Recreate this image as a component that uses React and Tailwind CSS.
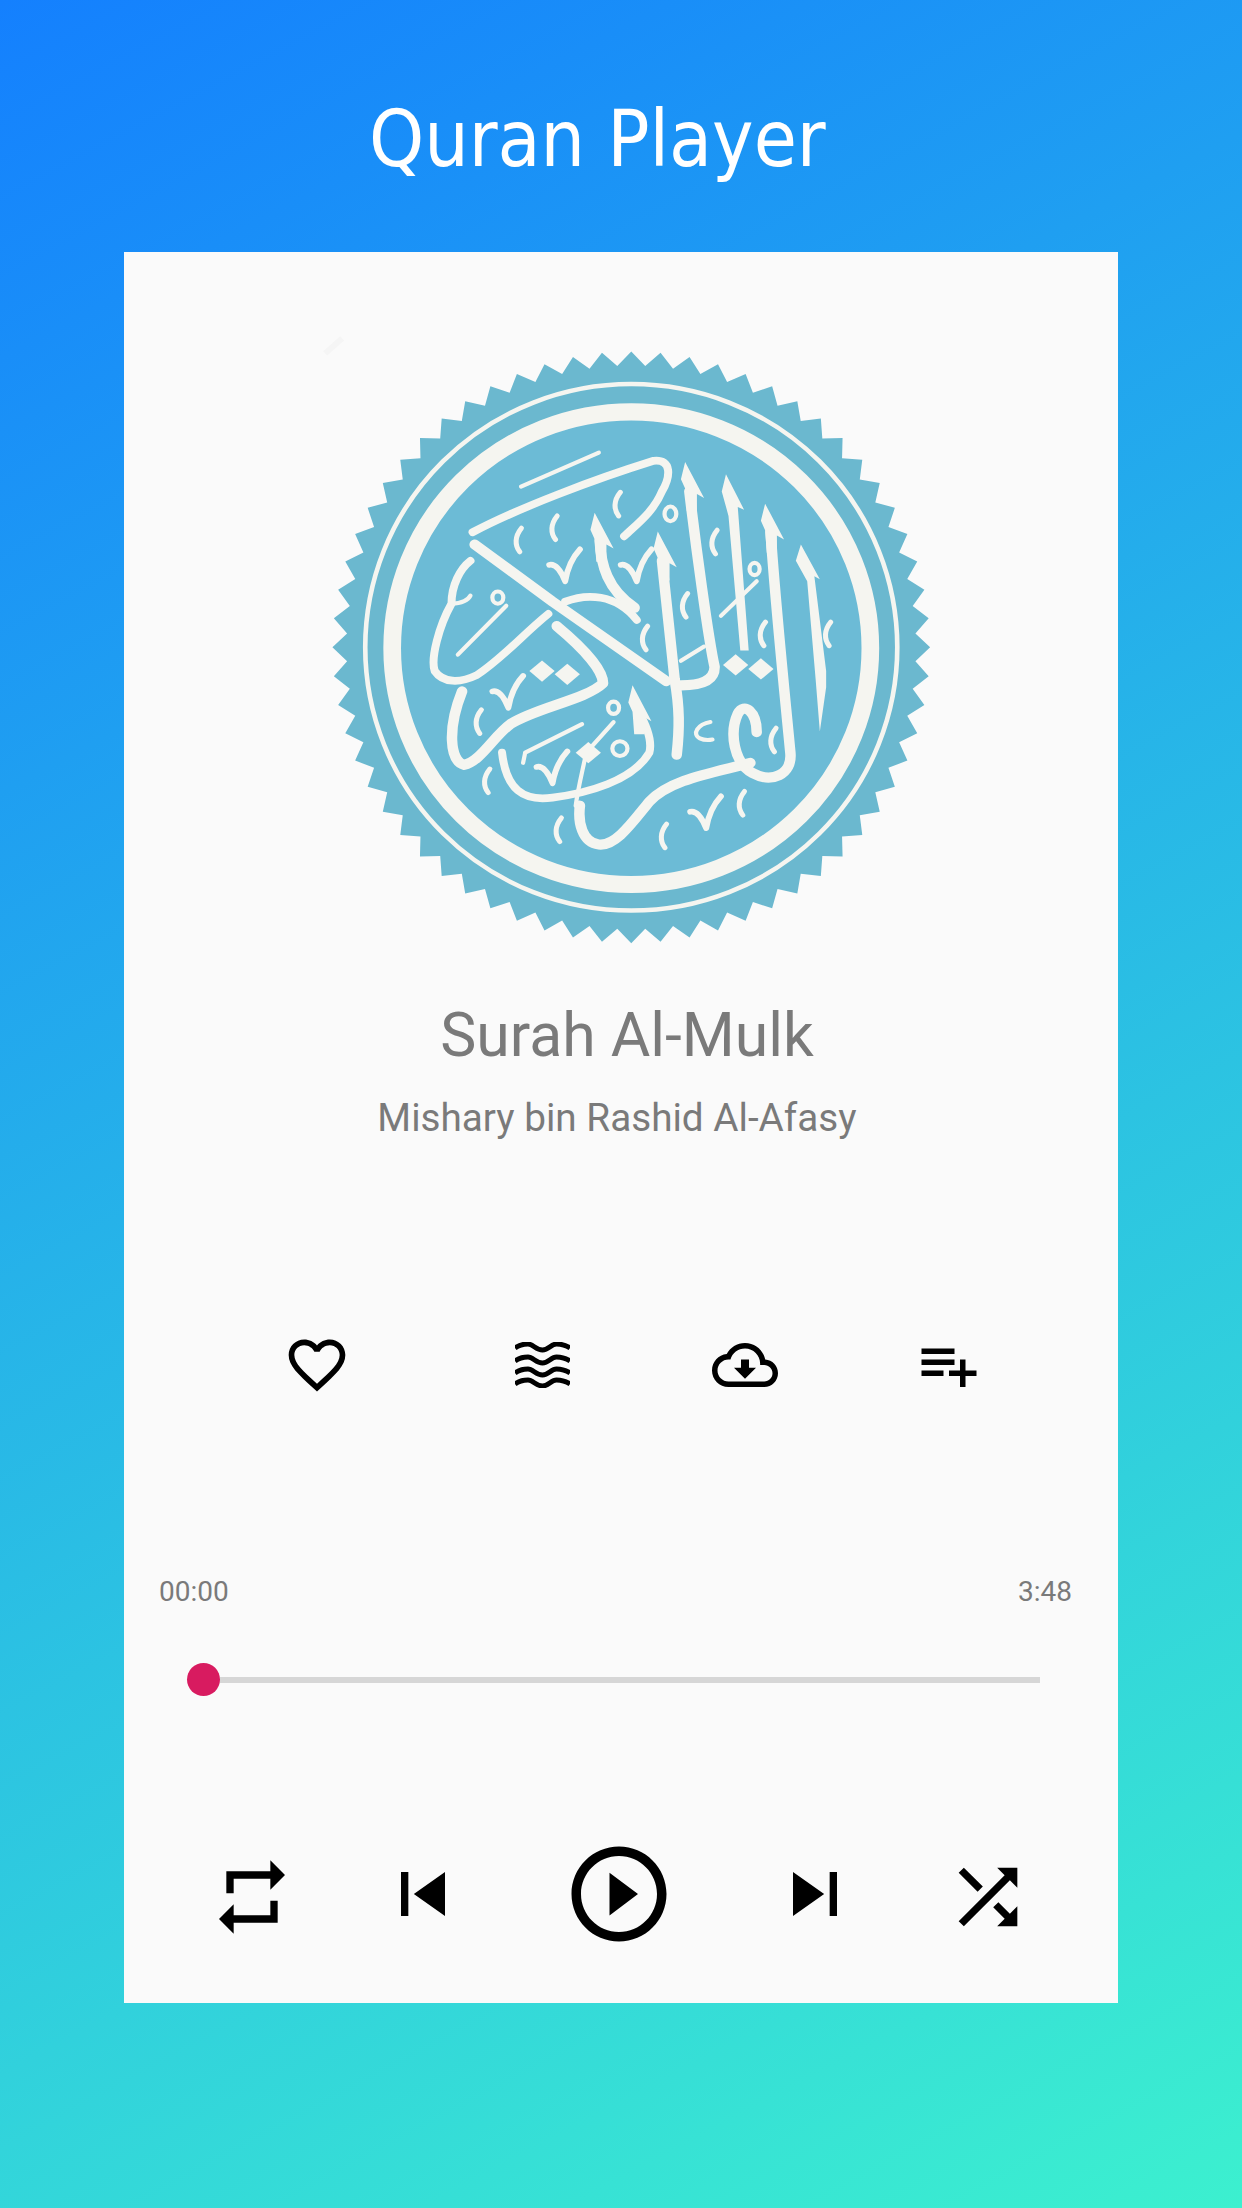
const ICONS = {
  heart: "M16.5 3c-1.74 0-3.41.81-4.5 2.09C10.91 3.81 9.24 3 7.5 3 4.42 3 2 5.42 2 8.5c0 3.78 3.4 6.86 8.55 11.54L12 21.35l1.45-1.32C18.6 15.36 22 12.28 22 8.5 22 5.42 19.58 3 16.5 3zm-4.4 15.55l-.1.1-.1-.1C7.14 14.24 4 11.39 4 8.5 4 6.5 5.5 5 7.5 5c1.54 0 3.04.99 3.57 2.36h1.87C13.46 5.99 14.96 5 16.5 5c2 0 3.5 1.5 3.5 3.5 0 2.89-3.14 5.74-7.9 10.05z",
  cloud: "M19.35 10.04C18.67 6.59 15.64 4 12 4 9.11 4 6.6 5.64 5.35 8.04 2.34 8.36 0 10.91 0 14c0 3.31 2.69 6 6 6h13c2.76 0 5-2.24 5-5 0-2.64-2.05-4.78-4.65-4.96zM19 18H6c-2.21 0-4-1.79-4-4s1.79-4 4-4h.71C7.37 7.69 9.48 6 12 6c3.04 0 5.5 2.46 5.5 5.5v.5H19c1.66 0 3 1.34 3 3s-1.34 3-3 3zm-5.55-8h-2.9v3H8l4 4 4-4h-2.55z",
  playlist: "M14 10H2v2h12v-2zm0-4H2v2h12V6zm4 8v-4h-2v4h-4v2h4v4h2v-4h4v-2h-4zM2 16h8v-2H2v2z",
  repeat: "M7 7h10v3l4-4-4-4v3H5v6h2V7zm10 10H7v-3l-4 4 4 4v-3h12v-6h-2v4z",
  prev: "M6 6h2v12H6zm3.5 6l8.5 6V6z",
  play: "M10 16.5l6-4.5-6-4.5v9zM12 2C6.48 2 2 6.48 2 12s4.48 10 10 10 10-4.48 10-10S17.52 2 12 2zm0 18c-4.41 0-8-3.59-8-8s3.59-8 8-8 8 3.59 8 8-3.59 8-8 8z",
  next: "M6 18l8.5-6L6 6v12zM16 6v12h2V6h-2z",
  shuffle: "M10.59 9.17L5.41 4 4 5.41l5.17 5.17 1.42-1.41zM14.5 4l2.04 2.04L4 18.59 5.41 20 17.96 7.46 20 9.5V4h-5.5zm.33 9.41l-1.41 1.41 3.13 3.13L14.5 20H20v-5.5l-2.04 2.04-3.13-3.13z",
};

function Icon({ name, className }) {
  return (
    <svg viewBox="0 0 24 24" className={`shrink-0 ${className}`} fill="#000">
      <path d={ICONS[name]} />
    </svg>
  );
}

function WavesIcon() {
  const rows = [5, 18, 30, 41];
  return (
    <svg viewBox="0 0 55 46" className="w-[55px] h-[46px]" fill="none" stroke="#000" strokeWidth="5">
      {rows.map((y) => (
        <path key={y} d={`M0 ${y + 1}C4 ${y - 2} 8 ${y - 3} 13 ${y - 3}S21 ${y + 3} 27.5 ${y + 3}S36 ${y - 3} 41.5 ${y - 3}S52 ${y - 1} 55 ${y + 1}`} />
      ))}
    </svg>
  );
}

// star edge of the seal
function sealPoints() {
  const pts = [];
  const teeth = 64;
  for (let i = 0; i < teeth * 2; i++) {
    const a = (i * Math.PI) / teeth - Math.PI / 2;
    const k = i % 2 === 0 ? 1 : 0.952;
    pts.push(`${(787 + 710 * k * Math.cos(a)).toFixed(1)},${(802 + 725 * k * Math.sin(a)).toFixed(1)}`);
  }
  return pts.join(" ");
}

const TIPS = [[1105, 450], [915, 348], [850, 518], [700, 472], [790, 895]];
const ALIFS = [
  "1190,550 1235,635 1222,628 1250,860 1250,900 1235,1008 1225,880 1205,640 1178,590",
  "1012,378 1055,465 1040,458 1066,810 1046,810 1018,480 1002,420",
];
const DOTS = [[575, 860], [635, 868], [1035, 845], [1095, 855], [685, 1060]];
const TICKS = [[520, 540], [605, 510], [755, 452], [985, 545], [915, 700], [820, 780], [1100, 770], [1255, 770], [425, 985], [445, 1130], [615, 1250], [865, 1265], [1050, 1185], [1125, 1030]];
const VEES = [[630, 610], [800, 610], [495, 920], [600, 1105], [965, 1215]];
const THICK = [
  "M415 550L600 690L870 885",
  "M1118 520C1130 700 1150 900 1165 1060C1170 1115 1120 1135 1075 1110C1030 1085 1020 1010 1040 965C1055 935 1085 960 1085 1010",
  "M1070 1085C980 1110 880 1125 830 1180C790 1230 750 1290 710 1285C670 1280 660 1230 665 1190",
  "M610 750C680 810 720 860 720 890C680 930 560 950 500 990C460 1020 430 1080 390 1090C355 1080 350 1000 385 910",
  "M925 420C940 550 970 780 985 850C985 885 950 895 905 895",
  "M860 590L890 880C902 950 902 1000 895 1065",
  "M712 540C715 600 730 660 795 705",
];
const MEDIUM = [
  "M630 690C680 670 750 670 800 735",
  "M410 520C520 460 700 390 840 345C885 340 880 385 860 420C840 470 800 500 770 530",
  "M405 590C380 610 360 650 360 695C330 750 310 830 320 860C340 890 380 890 420 870C480 830 530 770 590 720",
  "M480 1060C490 1150 530 1180 600 1170C680 1160 790 1130 830 1060C840 1020 810 970 795 940",
];
const THIN = [
  "M525 408L710 325",
  "M535 1060L670 990M535 1060L530 1085",
  "M905 835L960 800",
  "M375 820L490 700",
  "M1000 725L1085 640",
  "M680 1060L745 985",
  "M680 1060C670 1110 660 1150 655 1190",
  "M360 695C385 695 400 685 405 675",
];
const HOOPS = [[470, 680, 13, 15], [880, 475, 14, 18], [1080, 610, 12, 15], [745, 950, 13, 15], [760, 1050, 18, 18]];

function Seal() {
  const white = "#f5f5f0";
  return (
    <svg viewBox="0 0 1568 1568" preserveAspectRatio="none" className="w-[660px] h-[640px]" fill="none">
      <path d="M60 82L100 45" stroke="#f5f5f5" strokeWidth="14" />
      <polygon points={sealPoints()} fill="#6bb8cf" />
      <ellipse cx="787" cy="802" rx="632" ry="645" stroke={white} strokeWidth="11" />
      <ellipse cx="787" cy="804" rx="568" ry="579" fill="#6cbbd6" stroke={white} strokeWidth="42" />
      <g stroke={white} strokeLinecap="round" strokeLinejoin="round">
        {THICK.map((d) => <path key={d} d={d} strokeWidth="25" />)}
        {MEDIUM.map((d) => <path key={d} d={d} strokeWidth="19" />)}
        {THIN.map((d) => <path key={d} d={d} strokeWidth="10" />)}
        {TICKS.map(([x, y]) => (
          <path key={`${x}-${y}`} d={`M${x + 6} ${y - 30}C${x - 10} ${y - 10} ${x - 10} ${y + 12} ${x + 2} ${y + 28}`} strokeWidth="12" />
        ))}
        {VEES.map(([x, y]) => (
          <path key={`${x}-${y}`} d={`M${x - 38} ${y - 10}Q${x - 18} ${y - 15} ${x} ${y + 30}Q${x + 8} ${y - 18} ${x + 35} ${y - 48}`} strokeWidth="14" />
        ))}
        {HOOPS.map(([x, y, rx, ry]) => (
          <ellipse key={`${x}-${y}`} cx={x} cy={y} rx={rx} ry={ry} strokeWidth="10" />
        ))}
        <path d="M975 985C945 990 930 1015 950 1025C960 1030 970 1030 980 1028" strokeWidth="10" />
      </g>
      <g fill={white}>
        {ALIFS.map((points) => <polygon key={points} points={points} />)}
        {TIPS.map(([x, y]) => (
          <polygon key={`${x}-${y}`} points={`${x},${y} ${x + 45},${y + 88} ${x + 28},${y + 78} ${x + 28},${y + 120} ${x + 4},${y + 120} ${x},${y + 65} ${x - 10},${y + 42}`} />
        ))}
        {DOTS.map(([x, y]) => (
          <polygon key={`${x}-${y}`} points={`${x},${y - 26} ${x + 30},${y} ${x},${y + 26} ${x - 30},${y}`} />
        ))}
      </g>
    </svg>
  );
}

export default function App() {
  return (
    <div className="w-[1242px] h-[2208px] bg-[linear-gradient(152deg,#1480fe_0%,#3cf0cf_100%)] overflow-hidden">
      <header className="h-[252px] pt-[92px] pl-[369px]">
        <h1 className="text-white text-[78px] leading-[94px] font-['DejaVu_Sans',sans-serif] [font-stretch:condensed]">Quran Player</h1>
      </header>

      <main className="ml-[124px] w-[994px] h-[1751px] bg-[#fafafa] flex flex-col font-['Roboto',sans-serif] text-[#7a7a7a]">
        <div className="ml-[176px] mt-[68px] h-[640px]">
          <Seal />
        </div>

        <h2 className="mt-[41px] h-[70px] pl-[12px] text-center text-[60.7px] leading-[70px]">Surah Al-Mulk</h2>
        <p className="mt-[24px] h-[46px] pr-[8px] text-center text-[38.7px] leading-[46px]">Mishary bin Rashid Al-Afasy</p>

        <div className="mt-[191px] h-[66px] flex items-center">
          <Icon name="heart" className="ml-[159px] w-[68px] h-[68px]" />
          <div className="ml-[164px] w-[55px] flex justify-center"><WavesIcon /></div>
          <Icon name="cloud" className="ml-[142px] w-[66px] h-[66px]" />
          <Icon name="playlist" className="ml-[138px] w-[66px] h-[66px]" />
        </div>

        <div className="mt-[177px] h-[34px] pl-[35px] pr-[46px] flex justify-between text-[28px] leading-[34px]">
          <span>00:00</span>
          <span>3:48</span>
        </div>

        <div className="mt-[54px] ml-[63px] w-[853px] h-[33px] flex items-center">
          <span className="w-[33px] h-[33px] rounded-full bg-[#d81b60] shrink-0" />
          <span className="flex-1 h-[6px] bg-[#d6d6d6]" />
        </div>

        <div className="mt-[141px] h-[114px] flex items-center">
          <Icon name="repeat" className="ml-[84px] mt-[6px] w-[88px] h-[88px]" />
          <Icon name="prev" className="ml-[83px] w-[88px] h-[88px]" />
          <Icon name="play" className="ml-[95px] w-[114px] h-[114px]" />
          <Icon name="next" className="ml-[95px] w-[88px] h-[88px]" />
          <Icon name="shuffle" className="ml-[85px] mt-[6px] w-[88px] h-[88px]" />
        </div>
      </main>
    </div>
  );
}
